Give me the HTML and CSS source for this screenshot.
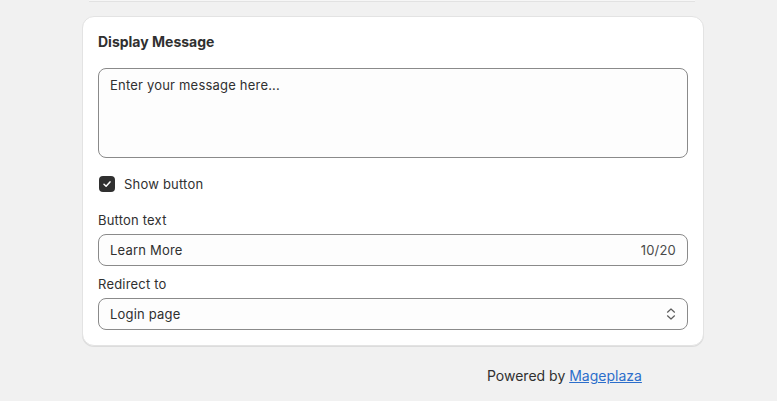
FILE: index.html
```html
<!DOCTYPE html>
<html>
<head>
<meta charset="utf-8">
<link rel="stylesheet" href="styles.css">
</head>
<body>
<div class="page">
  <div class="prev-card"></div>
  <div class="card">
    <h2 class="title">Display Message</h2>
    <div class="textarea">Enter your message here...</div>
    <label class="check-row">
      <span class="checkbox">
        <svg width="10" height="10" viewBox="0 0 10 10"><path d="M2 5.2 L4.1 7.2 L8 2.9" fill="none" stroke="#fff" stroke-width="1.5" stroke-linecap="round" stroke-linejoin="round"/></svg>
      </span>
      <span>Show button</span>
    </label>
    <div class="field">
      <div class="label">Button text</div>
      <div class="input"><span>Learn More</span><span class="count">10/20</span></div>
    </div>
    <div class="field">
      <div class="label">Redirect to</div>
      <div class="input"><span>Login page</span>
        <svg class="chev" width="12" height="16" viewBox="0 0 12 16"><path d="M2.5 6.2 L6 3 L9.5 6.2 M2.5 9.8 L6 13 L9.5 9.8" fill="none" stroke="#5c5c5c" stroke-width="1.2" stroke-linecap="round" stroke-linejoin="round"/></svg>
      </div>
    </div>
  </div>
  <div class="footer">Powered by <a href="#">Mageplaza</a></div>
</div>
</body>
</html>
```
FILE: styles.css
```css
html, body {
  margin: 0;
  padding: 0;
  background: #f1f1f1;
}
body {
  font-family: Inter, "Noto Sans", sans-serif;
  font-size: 13px;
  color: #303030;
}
.page {
  width: 622px;
  margin-left: 82px;
}
.prev-card {
  height: 1px;
  margin: 0 9px 0 7px;
  background: #f6f6f6;
  border-bottom: 1px solid #e2e2e2;
}
.card {
  margin-top: 14px;
  background: #fff;
  border: 1px solid #e3e3e3;
  border-radius: 12px;
  padding: 15px;
  box-shadow: 0 1px 0 #dcdcdc;
  letter-spacing: 0.2px;
}
.title {
  margin: 0;
  font-size: 14px;
  line-height: 20px;
  font-weight: 650;
  letter-spacing: 0;
  color: #303030;
}
.textarea {
  margin-top: 16px;
  box-sizing: content-box;
  padding: 6px 11px;
  height: 76px;
  border: 1px solid #8a8a8a;
  border-radius: 8px;
  background: #fdfdfd;
  line-height: 20px;
}
.check-row {
  display: flex;
  align-items: center;
  gap: 9px;
  margin-top: 16px;
  height: 20px;
  line-height: 20px;
}
.checkbox {
  width: 16px;
  height: 16px;
  margin-left: 1px;
  border-radius: 4px;
  background: #303030;
  display: flex;
  align-items: center;
  justify-content: center;
}
.field {
  margin-top: 16px;
}
.field + .field {
  margin-top: 8px;
}
.label {
  line-height: 20px;
  margin-bottom: 4px;
}
.input {
  display: flex;
  align-items: center;
  justify-content: space-between;
  height: 30px;
  padding: 0 11px;
  border: 1px solid #8a8a8a;
  border-radius: 8px;
  background: #fdfdfd;
}
.count {
  color: #4a4a4a;
}
.chev {
  margin-right: -1px;
}
.footer {
  margin-top: 20px;
  margin-left: 405px;
  font-size: 14px;
  line-height: 20px;
  color: #303030;
}
.footer a {
  color: #2c6ecb;
  text-decoration: underline;
}
```
